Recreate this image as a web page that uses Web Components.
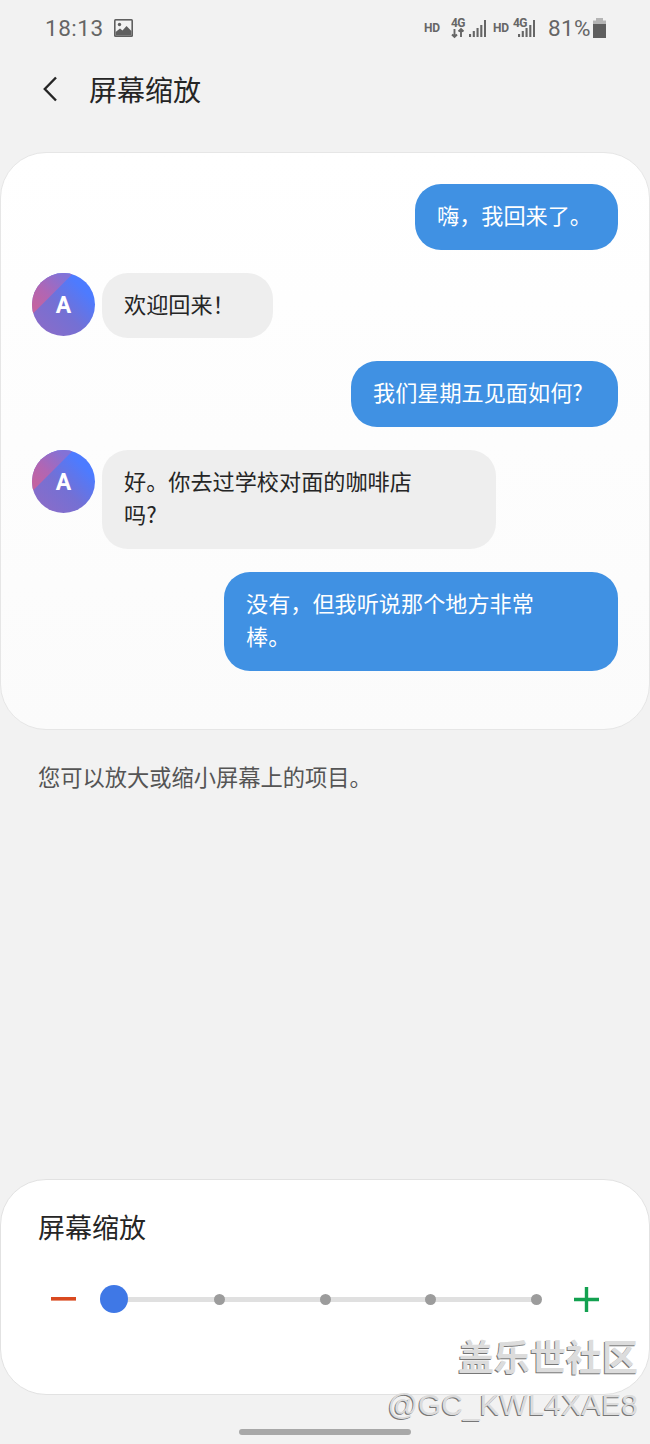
<!DOCTYPE html>
<html lang="zh">
<head>
<meta charset="utf-8">
<title>屏幕缩放</title>
<style>
  html, body { margin: 0; padding: 0; }
  body {
    width: 650px;
    height: 1444px;
    overflow: hidden;
    background: #f2f2f2;
    font-family: "Noto Sans CJK SC", "Noto Sans", sans-serif;
    color: #252525;
  }
</style>
</head>
<body>
<zoom-page>
  <status-bar></status-bar>
  <top-bar>屏幕缩放</top-bar>
  <preview-card>
    <chat-bubble side="me" style="--w:203px">嗨，我回来了。</chat-bubble>
    <chat-bubble side="them" style="--w:171px">欢迎回来！</chat-bubble>
    <chat-bubble side="me" style="--w:267px">我们星期五见面如何?</chat-bubble>
    <chat-bubble side="them" style="--w:394px">好。你去过学校对面的咖啡店<br>吗?</chat-bubble>
    <chat-bubble side="me" style="--w:394px">没有，但我听说那个地方非常<br>棒。</chat-bubble>
  </preview-card>
  <hint-text>您可以放大或缩小屏幕上的项目。</hint-text>
  <zoom-panel>屏幕缩放</zoom-panel>
  <home-bar></home-bar>
</zoom-page>
<water-mark></water-mark>

<script>
class ZoomPage extends HTMLElement {
  constructor() {
    super();
    this.attachShadow({ mode: 'open' });
    this.shadowRoot.innerHTML = `
      <style>
        :host { display: flex; flex-direction: column; height: 1444px; }
      </style>
      <slot></slot>
    `;
  }
}

class StatusBar extends HTMLElement {
  constructor() {
    super();
    this.attachShadow({ mode: 'open' });
    const bars = (x, hs) => hs.map((h, i) =>
      `<rect x="${x + i * 3.75}" y="${20 - h}" width="2.1" height="${h}" fill="#666"/>`).join('');
    this.shadowRoot.innerHTML = `
      <style>
        :host {
          display: flex; align-items: center; height: 56px;
          padding: 0 44px 0 45px; color: #666;
          font-family: Roboto, "Noto Sans", sans-serif;
        }
        .time { font-size: 22.5px; letter-spacing: .5px; }
        .pic { margin-left: 10px; }
        .right { margin-left: auto; display: flex; align-items: center; }
        .hd { font-size: 12px; font-weight: 700; letter-spacing: -.3px; }
        .net { position: relative; height: 22px; }
        .net b { position: absolute; top: 1px; left: 0; font-size: 12px; line-height: 10px; letter-spacing: -.6px; }
        .net svg { position: absolute; left: 0; top: 0; }
        .pct { font-size: 22.5px; letter-spacing: .4px; margin-left: 13px; }
        .batt { margin-left: 2px; }
      </style>
      <span class="time">18:13</span>
      <svg class="pic" width="19" height="18" viewBox="0 0 19 18">
        <rect width="19" height="18" rx="1.5" fill="#5f5f5f"/>
        <rect x="1.6" y="1.6" width="15.8" height="14.8" fill="#f2f2f2"/>
        <circle cx="5.5" cy="5.5" r="1.7" fill="#5f5f5f"/>
        <path d="M1.6 13 L6 9.5 L8.5 11.5 L12.5 7 L17.4 12 V16.4 H1.6Z" fill="#5f5f5f"/>
      </svg>
      <div class="right">
        <span class="hd" style="width:16px;margin-right:11px">HD</span>
        <div class="net" style="width:35px">
          <b>4G</b>
          <svg width="35" height="22" viewBox="0 0 35 22">
            <path d="M3.5 12V20M1 17.5L3.5 20L6 17.5M10 20V12M7.5 14.5L10 12L12.5 14.5" fill="none" stroke="#666" stroke-width="1.9"/>
            ${bars(18, [3, 6, 9, 12, 17])}
          </svg>
        </div>
        <span class="hd" style="width:15px;margin-left:7px;margin-right:5px">HD</span>
        <div class="net" style="width:22px">
          <b>4G</b>
          <svg width="22" height="22" viewBox="0 0 22 22">
            ${bars(5, [3, 6, 9, 12, 17])}
          </svg>
        </div>
        <span class="pct">81%</span>
        <svg class="batt" width="13" height="20" viewBox="0 0 13 20">
          <rect x="3" y="0" width="7" height="3" fill="#b5b5b5"/>
          <rect x="0" y="2.5" width="13" height="3.5" fill="#b5b5b5"/>
          <rect x="0" y="6" width="13" height="14" fill="#5f5f5f"/>
        </svg>
      </div>
    `;
  }
}

class TopBar extends HTMLElement {
  constructor() {
    super();
    this.attachShadow({ mode: 'open' });
    this.shadowRoot.innerHTML = `
      <style>
        :host {
          display: flex; align-items: center; height: 68px; box-sizing: border-box;
          padding: 0 0 2px 43px; font-size: 28px; color: #252525;
        }
        svg { margin-right: 32px; }
      </style>
      <svg width="14" height="26" viewBox="0 0 14 26">
        <path d="M13 1.5L1.8 13L13 24.5" fill="none" stroke="#252525" stroke-width="2.4"/>
      </svg>
      <slot></slot>
    `;
  }
}

class PreviewCard extends HTMLElement {
  constructor() {
    super();
    this.attachShadow({ mode: 'open' });
    this.shadowRoot.innerHTML = `
      <style>
        :host {
          display: flex; flex-direction: column; gap: 23px;
          box-sizing: border-box; height: 578px; margin-top: 28px;
          padding: 31px 31px 0 31px;
          background: linear-gradient(#fff, #fbfbfb);
          border: 1px solid #e6e6e6; border-radius: 46px;
        }
      </style>
      <slot></slot>
    `;
  }
}

class ChatBubble extends HTMLElement {
  constructor() {
    super();
    this.attachShadow({ mode: 'open' });
    const them = this.getAttribute('side') === 'them';
    this.shadowRoot.innerHTML = `
      <style>
        :host { display: flex; justify-content: ${them ? 'flex-start' : 'flex-end'}; gap: 7px; align-items: flex-start; }
        .bubble {
          box-sizing: border-box; width: var(--w);
          padding: 14px 22px 18px; font-size: 22.15px; line-height: 33.5px;
          border-radius: 26px;
          background: ${them ? '#eeeeee' : '#4091e3'};
          color: ${them ? '#252525' : '#fff'};
        }
        .avatar {
          position: relative; overflow: hidden;
          width: 63px; height: 63px; border-radius: 50%; flex: none;
          display: flex; align-items: center; justify-content: center;
          background: linear-gradient(45deg, #8a6cc8 10%, #7470d4 45%, #4d7bff 78%);
          color: #fff; font: 700 23px Roboto, sans-serif;
        }
        .avatar::before {
          content: ""; position: absolute; inset: 0;
          background: linear-gradient(45deg, #c4639f 24%, #b066b4 45%, #8372d6 72%);
          clip-path: polygon(0 0, 42px 0, 0 42px);
        }
        .avatar span { position: relative; padding-top: 2px; }
      </style>
      ${them ? '<div class="avatar"><span>A</span></div>' : ''}
      <div class="bubble"><slot></slot></div>
    `;
  }
}

class HintText extends HTMLElement {
  constructor() {
    super();
    this.attachShadow({ mode: 'open' });
    this.shadowRoot.innerHTML = `
      <style>
        :host {
          display: block; margin-top: 30px; padding-left: 38px;
          font-size: 22.25px; line-height: 32px; color: #555;
        }
      </style>
      <slot></slot>
    `;
  }
}

class ZoomSlider extends HTMLElement {
  constructor() {
    super();
    this.attachShadow({ mode: 'open' });
    this.shadowRoot.innerHTML = `
      <style>
        :host { display: flex; align-items: center; height: 34px; padding: 0 50px 0 50px; }
        .track {
          flex: 1; margin: 0 38px 0 38px; height: 28px;
          display: flex; align-items: center; justify-content: space-between;
          background: linear-gradient(#e0e0e0, #e0e0e0) center / 100% 5px no-repeat;
        }
        /* zero-width stops so the marks are spaced by their centres */
        .stop { width: 0; display: flex; justify-content: center; }
        .stop span { flex: none; width: 11px; height: 11px; border-radius: 50%; background: #9c9c9c; }
        .stop .thumb { width: 28px; height: 28px; background: #3f78e6; }
      </style>
      <svg width="25" height="4" viewBox="0 0 25 4"><rect width="25" height="3.6" fill="#d9491f"/></svg>
      <div class="track">
        <div class="stop"><span class="thumb"></span></div>
        <div class="stop"><span></span></div>
        <div class="stop"><span></span></div>
        <div class="stop"><span></span></div>
        <div class="stop"><span></span></div>
      </div>
      <svg width="25" height="25" viewBox="0 0 25 25">
        <path d="M0 12.5H25M12.5 0V25" stroke="#13a150" stroke-width="3.4"/>
      </svg>
    `;
  }
}
customElements.define('zoom-slider', ZoomSlider);

class ZoomPanel extends HTMLElement {
  constructor() {
    super();
    this.attachShadow({ mode: 'open' });
    this.shadowRoot.innerHTML = `
      <style>
        :host {
          display: block; box-sizing: border-box; height: 216px; margin-top: auto;
          background: #fff; border: 1px solid #e2e2e2; border-radius: 46px;
        }
        .title { padding: 27px 0 0 37px; font-size: 27px; line-height: 40px; color: #252525; }
        zoom-slider { margin-top: 35px; }
      </style>
      <div class="title"><slot></slot></div>
      <zoom-slider></zoom-slider>
    `;
  }
}

class HomeBar extends HTMLElement {
  constructor() {
    super();
    this.attachShadow({ mode: 'open' });
    this.shadowRoot.innerHTML = `
      <style>
        :host { display: flex; justify-content: center; height: 49px; padding-top: 34px; box-sizing: border-box; }
        div { width: 172px; height: 6px; border-radius: 3px; background: #a8a8a8; }
      </style>
      <div></div>
    `;
  }
}

// watermark sits over the panel, like the one stamped on the screenshot
class WaterMark extends HTMLElement {
  constructor() {
    super();
    this.attachShadow({ mode: 'open' });
    this.shadowRoot.innerHTML = `
      <style>
        :host {
          position: absolute; right: 12px; top: 1333px;
          display: flex; flex-direction: column; align-items: flex-end;
          color: #dcdcdc; text-shadow: -1px 1px 0 #777;
        }
        .cn { font-size: 36px; font-weight: 700; line-height: 44px; }
        .id { font: 400 30px/36px "Liberation Sans", sans-serif; margin-top: 10px; }
      </style>
      <span class="cn">盖乐世社区</span>
      <span class="id">@GC_KWL4XAE8</span>
    `;
  }
}

customElements.define('zoom-page', ZoomPage);
customElements.define('status-bar', StatusBar);
customElements.define('top-bar', TopBar);
customElements.define('preview-card', PreviewCard);
customElements.define('chat-bubble', ChatBubble);
customElements.define('hint-text', HintText);
customElements.define('zoom-panel', ZoomPanel);
customElements.define('home-bar', HomeBar);
customElements.define('water-mark', WaterMark);
</script>
</body>
</html>
